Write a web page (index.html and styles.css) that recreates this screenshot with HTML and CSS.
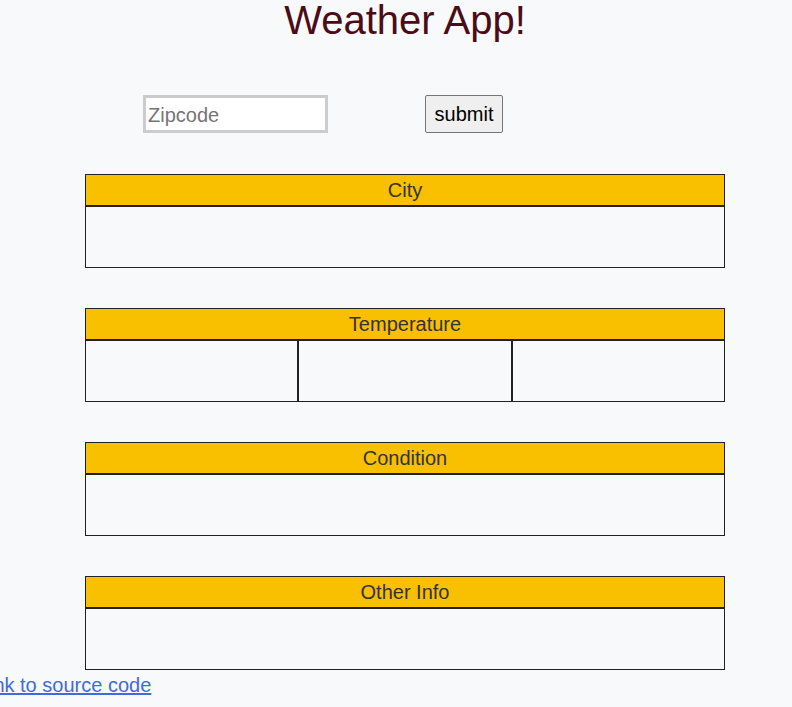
FILE: index.html
```html
<!DOCTYPE html>
<html>
<head>
<meta charset="utf-8">
<title>Weather App!</title>
<link rel="stylesheet" href="styles.css">
</head>
<body>
<div class="page">
  <h1 class="title">Weather App!</h1>
  <form class="search">
    <input class="zip" type="text" placeholder="Zipcode">
    <button class="submit" type="button">submit</button>
  </form>
  <section class="panel">
    <div class="panel-head">City</div>
    <div class="panel-body"></div>
  </section>
  <section class="panel">
    <div class="panel-head">Temperature</div>
    <div class="panel-cells">
      <div class="cell"></div>
      <div class="cell"></div>
      <div class="cell"></div>
    </div>
  </section>
  <section class="panel">
    <div class="panel-head">Condition</div>
    <div class="panel-body"></div>
  </section>
  <section class="panel">
    <div class="panel-head">Other Info</div>
    <div class="panel-body"></div>
  </section>
</div>
<a class="source" href="#">link to source code</a>
</body>
</html>
```
FILE: styles.css
```css
html, body {
  margin: 0;
  padding: 0;
  background: #f8f9fa;
  overflow: hidden;
}
body {
  font-family: "Liberation Sans", Arial, sans-serif;
  font-size: 20px;
  color: #333;
}
.page {
  padding-left: 18px;
}
.title {
  margin: 0;
  font-size: 40px;
  line-height: 40px;
  font-weight: normal;
  text-align: center;
  color: #4b0c17;
}
.search {
  display: flex;
  align-items: center;
  margin: 55px 0 0 125px;
  height: 38px;
}
.zip {
  box-sizing: border-box;
  width: 185px;
  height: 38px;
  border: 3px solid #cccccc;
  background: #ffffff;
  padding: 2px 2px 0;
  font-family: "Liberation Sans", Arial, sans-serif;
  font-size: 20px;
  color: #333;
  outline: none;
}
.zip::placeholder {
  color: #757575;
}
.submit {
  box-sizing: border-box;
  margin-left: 97px;
  width: 78px;
  height: 38px;
  border: 1px solid #767676;
  border-radius: 2px;
  background: #efefef;
  font-family: "Liberation Sans", Arial, sans-serif;
  font-size: 20px;
  color: #000;
  padding: 0;
}
.panel {
  width: 640px;
  margin: 41px 0 0 67px;
}
.panel + .panel {
  margin-top: 40px;
}
.panel-head {
  box-sizing: border-box;
  height: 32px;
  border: 1px solid #222;
  background: #f9c000;
  text-align: center;
  line-height: 30px;
  color: #333;
}
.panel-body {
  box-sizing: border-box;
  height: 62px;
  border: 1px solid #222;
}
.panel-cells {
  display: flex;
  height: 62px;
}
.cell {
  flex: 1;
  box-sizing: border-box;
  border: 1px solid #222;
}
.source {
  display: inline-block;
  margin: 4px 0 0 -15.5px;
  line-height: 23px;
  color: #4169e1;
  text-decoration: underline;
}
```
